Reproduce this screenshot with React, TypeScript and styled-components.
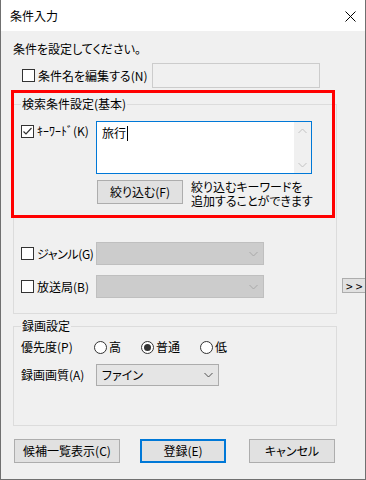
import React from "react";
import styled, { createGlobalStyle, css } from "styled-components";

const Global = createGlobalStyle`
  html, body { margin: 0; padding: 0; background: #ffffff; }
  body {
    font-family: "Noto Sans CJK JP", "Noto Sans", sans-serif;
    font-size: 12px;
    color: #000;
  }
  * { box-sizing: border-box; }
`;

const Window = styled.div`
  position: relative;
  width: 366px;
  height: 480px;
  background: #f0f0f0;
  border: 1px solid #707070;
  border-top: none;
  overflow: hidden;
  display: flex;
  flex-direction: column;
  font-size: 12px;
  line-height: 16px;
  font-feature-settings: "palt";
`;

const TitleBar = styled.div`
  height: 31px;
  flex-shrink: 0;
  background: #ffffff;
  display: flex;
  align-items: center;
  justify-content: space-between;
  padding: 1px 9px 0 9px;
`;

const TitleText = styled.span`
  font-size: 12px;
`;

const Content = styled.div`
  display: flex;
  flex-direction: column;
  padding-left: 12px;
`;

const Instruction = styled.div`
  margin-top: 10px;
  line-height: 16px;
`;

const CheckRow = styled.div`
  display: flex;
  align-items: center;
  height: 25px;
  margin-top: 6px;
  padding-left: 9px;
`;

const CheckBox = styled.span<{ $checked?: boolean }>`
  width: 13px;
  height: 13px;
  flex-shrink: 0;
  border: 1px solid #333333;
  background: #ffffff;
  display: inline-flex;
  align-items: center;
  justify-content: center;
`;

const CheckLabel = styled.span<{ $w?: number; $tight?: boolean }>`
  margin-left: 3px;
  white-space: nowrap;
  ${(p) => p.$w && css`width: ${p.$w}px;`}
  ${(p) => p.$tight && css`letter-spacing: -0.4px;`}
`;

const TextField = styled.div`
  width: 168px;
  height: 25px;
  background: #f0f0f0;
  border: 1px solid #cccccc;
`;

const Group = styled.fieldset<{ $mt: number; $w?: number }>`
  margin: ${(p) => p.$mt}px 0 0 0;
  padding: 0;
  border: 1px solid #dcdcdc;
  width: ${(p) => p.$w ?? 324}px;
  flex-shrink: 0;
  min-width: 0;
`;

const Legend = styled.legend`
  margin-left: 7px;
  padding: 0 1px;
  line-height: 16px;
  font-size: 12px;
`;

const GroupBody = styled.div<{ $pt: number; $pb: number }>`
  padding: ${(p) => p.$pt}px 0 ${(p) => p.$pb}px 7px;
  display: flex;
  flex-direction: column;
`;

const FieldRow = styled.div<{ $mt?: number; $align?: string }>`
  display: flex;
  align-items: ${(p) => p.$align ?? "center"};
  margin-top: ${(p) => p.$mt ?? 0}px;
`;

const LabelCell = styled.div<{ $w: number; $mt?: number; $h?: number }>`
  width: ${(p) => p.$w}px;
  flex-shrink: 0;
  display: flex;
  align-items: center;
  margin-top: ${(p) => p.$mt ?? 0}px;
  white-space: nowrap;
  ${(p) => p.$h && css`height: ${p.$h}px;`}
`;

const TextAreaBox = styled.div`
  width: 216px;
  height: 53px;
  background: #ffffff;
  border: 1px solid #0078d7;
  display: flex;
`;

const TextAreaText = styled.div`
  flex: 1;
  padding: 3px 0 0 5px;
  font-size: 12px;
  line-height: 16px;
  display: flex;
  align-items: flex-start;
`;

const Caret = styled.span`
  display: inline-block;
  width: 1px;
  height: 15px;
  background: #000;
  margin-left: 1px;
  margin-top: 1px;
`;

const ScrollTrack = styled.div`
  width: 17px;
  background: #f0f0f0;
  display: flex;
  flex-direction: column;
  justify-content: space-between;
  align-items: center;
  padding: 6px 0 5px 0;
`;

const Button = styled.div<{ $w: number; $h?: number; $default?: boolean; $ml?: number }>`
  width: ${(p) => p.$w}px;
  height: ${(p) => p.$h ?? 24}px;
  flex-shrink: 0;
  margin-left: ${(p) => p.$ml ?? 0}px;
  background: #e1e1e1;
  border: ${(p) => (p.$default ? "2px solid #0078d7" : "1px solid #adadad")};
  display: flex;
  align-items: center;
  justify-content: center;
  white-space: nowrap;
  font-size: 12px;
`;

const HelpText = styled.div`
  margin-left: 8px;
  display: flex;
  flex-direction: column;
`;

const HelpLine = styled.span`
  display: block;
  height: 14px;
  line-height: 14px;
  white-space: nowrap;
`;

const Combo = styled.div<{ $w: number; $h?: number; $disabled?: boolean }>`
  width: ${(p) => p.$w}px;
  height: ${(p) => p.$h ?? 23}px;
  background: ${(p) => (p.$disabled ? "#cccccc" : "#e5e5e5")};
  border: 1px solid ${(p) => (p.$disabled ? "#bfbfbf" : "#acacac")};
  display: flex;
  align-items: center;
  justify-content: space-between;
  padding: 0 5px 0 5px;
`;

const SideRow = styled.div`
  display: flex;
  align-items: flex-end;
`;

const SideButton = styled.div`
  width: 32px;
  height: 15px;
  margin: 0 0 21px 5px;
  background: #e1e1e1;
  border: 1px solid #adadad;
  display: flex;
  align-items: center;
  padding-left: 3px;
  font-size: 12px;
  line-height: 13px;
  letter-spacing: 3px;
  flex-shrink: 0;
  white-space: nowrap;
`;

const RadioItem = styled.label<{ $w: number }>`
  width: ${(p) => p.$w}px;
  display: flex;
  align-items: center;
  flex-shrink: 0;
`;

const RadioCircle = styled.span<{ $checked?: boolean }>`
  width: 13px;
  height: 13px;
  border-radius: 50%;
  border: 1px solid #333333;
  background: #ffffff;
  display: inline-flex;
  align-items: center;
  justify-content: center;
  margin-right: 2px;
  &::after {
    content: "";
    width: 7px;
    height: 7px;
    border-radius: 50%;
    background: ${(p) => (p.$checked ? "#333333" : "transparent")};
  }
`;

const ButtonBar = styled.div`
  display: flex;
  margin-top: 13px;
`;

const Highlight = styled.div`
  position: absolute;
  left: 10px;
  top: 90px;
  width: 324px;
  height: 128px;
  border: 3px solid #ff0000;
  pointer-events: none;
`;

const Chevron = ({ color, up }: { color: string; up?: boolean }) => (
  <svg width="9" height="6" viewBox="0 0 9 6">
    <path
      d={up ? "M0.5 5 L4.5 1 L8.5 5" : "M0.5 1 L4.5 5 L8.5 1"}
      fill="none"
      stroke={color}
      strokeWidth="1"
    />
  </svg>
);

const Check = () => (
  <svg width="11" height="11" viewBox="0 0 11 11">
    <path d="M1.5 5.5 L4 8 L9.5 2" fill="none" stroke="#333" strokeWidth="1.2" />
  </svg>
);

const CloseIcon = () => (
  <svg width="11" height="11" viewBox="0 0 11 11">
    <path d="M0.5 0.5 L10.5 10.5 M10.5 0.5 L0.5 10.5" stroke="#000" strokeWidth="1" />
  </svg>
);

export default function App() {
  return (
    <>
      <Global />
      <Window>
        <TitleBar>
          <TitleText>条件入力</TitleText>
          <CloseIcon />
        </TitleBar>
        <Content>
          <Instruction>条件を設定してください。</Instruction>
          <CheckRow>
            <CheckBox />
            <CheckLabel $w={114}>条件名を編集する(N)</CheckLabel>
            <TextField />
          </CheckRow>

          <SideRow>
            <Group $mt={8}>
              <Legend>検索条件設定(基本)</Legend>
              <GroupBody $pt={9} $pb={15}>
                <FieldRow $align="flex-start">
                  <LabelCell $w={75} $mt={2}>
                    <CheckBox $checked>
                      <Check />
                    </CheckBox>
                    <CheckLabel>ｷｰﾜｰﾄﾞ(K)</CheckLabel>
                  </LabelCell>
                  <TextAreaBox>
                    <TextAreaText>
                      旅行
                      <Caret />
                    </TextAreaText>
                    <ScrollTrack>
                      <Chevron color="#c2c2c2" up />
                      <Chevron color="#c2c2c2" />
                    </ScrollTrack>
                  </TextAreaBox>
                </FieldRow>
                <FieldRow $mt={6} $align="flex-start">
                  <LabelCell $w={76} />
                  <Button $w={86}>絞り込む(F)</Button>
                  <HelpText>
                    <HelpLine>絞り込むキーワードを</HelpLine>
                    <HelpLine>追加することができます</HelpLine>
                  </HelpText>
                </FieldRow>
                <FieldRow $mt={34}>
                  <LabelCell $w={75}>
                    <CheckBox />
                    <CheckLabel $tight>ジャンル(G)</CheckLabel>
                  </LabelCell>
                  <Combo $w={168} $disabled>
                    <span />
                    <Chevron color="#a8a8a8" />
                  </Combo>
                </FieldRow>
                <FieldRow $mt={10}>
                  <LabelCell $w={75}>
                    <CheckBox />
                    <CheckLabel>放送局(B)</CheckLabel>
                  </LabelCell>
                  <Combo $w={168} $disabled>
                    <span />
                    <Chevron color="#a8a8a8" />
                  </Combo>
                </FieldRow>
              </GroupBody>
            </Group>
            <SideButton>&gt;&gt;</SideButton>
          </SideRow>

          <Group $mt={4}>
            <Legend>録画設定</Legend>
            <GroupBody $pt={3} $pb={39}>
              <FieldRow>
                <LabelCell $w={73} $h={20}>優先度(P)</LabelCell>
                <RadioItem $w={47}>
                  <RadioCircle />高
                </RadioItem>
                <RadioItem $w={59}>
                  <RadioCircle $checked />普通
                </RadioItem>
                <RadioItem $w={40}>
                  <RadioCircle />低
                </RadioItem>
              </FieldRow>
              <FieldRow $mt={7}>
                <LabelCell $w={75}>録画画質(A)</LabelCell>
                <Combo $w={123} $h={22}>
                  <span>ファイン</span>
                  <Chevron color="#505050" />
                </Combo>
              </FieldRow>
            </GroupBody>
          </Group>

          <ButtonBar>
            <Button $w={106} $ml={1}>候補一覧表示(C)</Button>
            <Button $w={86} $ml={20} $default>登録(E)</Button>
            <Button $w={86} $ml={23}>キャンセル</Button>
          </ButtonBar>
        </Content>
        <Highlight />
      </Window>
    </>
  );
}
